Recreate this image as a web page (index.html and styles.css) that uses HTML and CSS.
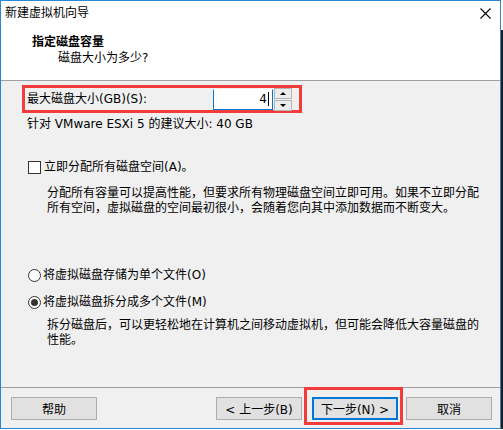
FILE: index.html
```html
<!DOCTYPE html>
<html lang="zh-CN">

<head>
    <meta charset="UTF-8">
    <meta name="viewport" content="width=device-width, initial-scale=1.0">
    <title>新建虚拟机向导</title>
    <link rel="stylesheet" href="styles.css">
</head>

<body>
    <div class="window">
        <div class="titlebar">
            <span class="titlebar-text">新建虚拟机向导</span>
            <svg class="close-icon" width="11" height="11" viewBox="0 0 11 11">
                <path d="M0.5 0.5 L10.5 10.5 M10.5 0.5 L0.5 10.5" stroke="#000" stroke-width="1.1" fill="none"/>
            </svg>
        </div>

        <div class="header">
            <div class="header-title">指定磁盘容量</div>
            <div class="header-subtitle">磁盘大小为多少?</div>
        </div>

        <div class="content">
            <div class="size-box">
                <label class="size-label" for="diskSize">最大磁盘大小(GB)(S):</label>
                <div class="size-input" id="diskSize"><span class="caret">4</span></div>
                <div class="spinner">
                    <div class="spin-btn"><span class="arrow-up"></span></div>
                    <div class="spin-btn"><span class="arrow-down"></span></div>
                </div>
            </div>

            <p class="hint">针对 VMware ESXi 5 的建议大小: 40 GB</p>

            <div class="option first-option">
                <span class="checkbox"></span>
                <span>立即分配所有磁盘空间(A)。</span>
            </div>
            <p class="desc">分配所有容量可以提高性能，但要求所有物理磁盘空间立即可用。如果不立即分配所有空间，虚拟磁盘的空间最初很小，会随着您向其中添加数据而不断变大。</p>

            <div class="option radio-option">
                <span class="radio"></span>
                <span>将虚拟磁盘存储为单个文件(O)</span>
            </div>
            <div class="option">
                <span class="radio checked"></span>
                <span>将虚拟磁盘拆分成多个文件(M)</span>
            </div>
            <p class="desc desc-split">拆分磁盘后，可以更轻松地在计算机之间移动虚拟机，但可能会降低大容量磁盘的性能。</p>
        </div>

        <div class="footer">
            <button class="btn btn-help">帮助</button>
            <div class="footer-spacer"></div>
            <button class="btn">&lt; 上一步(B)</button>
            <button class="btn btn-default">下一步(N) &gt;</button>
            <button class="btn btn-cancel">取消</button>
        </div>
    </div>
</body>

</html>
```

FILE: styles.css
```css
body {
    margin: 0;
    padding: 0;
    background: linear-gradient(#ffffff 30px, #1e1e1e 30px);
    font-family: "DejaVu Sans", "Noto Sans CJK SC", sans-serif;
    font-size: 12px;
    color: #000;
}

.window {
    width: 501px;
    height: 429px;
    box-sizing: border-box;
    border: 1px solid #2b87d6;
    background-color: #f0f0f0;
    display: flex;
    flex-direction: column;
}

.titlebar {
    height: 24px;
    display: flex;
    align-items: center;
    background-color: #fff;
    padding-left: 4px;
}

.titlebar-text {
    flex: 1;
    line-height: 24px;
}

.close-icon {
    margin-right: 9px;
}

.header {
    background-color: #fff;
    height: 56px;
    padding: 9px 0 0 31px;
    box-sizing: border-box;
    border-bottom: 1px solid #a0a0a0;
}

.header-title {
    font-weight: bold;
    line-height: 16px;
}

.header-subtitle {
    line-height: 16px;
    margin-left: 26px;
}

.content {
    flex: 1;
    padding: 4px 0 0 26px;
}

.size-box {
    display: flex;
    align-items: center;
    width: 280px;
    height: 28px;
    margin-left: -5px;
    box-sizing: border-box;
    border: 3px solid #f23b3b;
}

.size-label {
    width: 186px;
    padding-left: 2px;
    line-height: 16px;
}

.size-input {
    width: 60px;
    height: 21px;
    box-sizing: border-box;
    background-color: #fff;
    border: 1px solid #0078d7;
    border-top-color: #fff;
    text-align: right;
    padding-right: 3px;
    line-height: 19px;
}

.caret {
    border-right: 1px solid #000;
    padding-right: 1px;
}

.spinner {
    display: flex;
    flex-direction: column;
    gap: 1px;
    margin-left: 1px;
}

.spin-btn {
    width: 16px;
    height: 9px;
    border: 1px solid #b5b5b5;
    background-color: #ececec;
    display: flex;
    align-items: center;
    justify-content: center;
}

.arrow-up {
    border-left: 3px solid transparent;
    border-right: 3px solid transparent;
    border-bottom: 3px solid #000;
}

.arrow-down {
    border-left: 3px solid transparent;
    border-right: 3px solid transparent;
    border-top: 3px solid #000;
}

.hint {
    margin: 3px 0 0 0;
    line-height: 16px;
}

.option {
    display: flex;
    align-items: center;
    line-height: 16px;
    margin-top: 11px;
    margin-left: 1px;
}

.first-option {
    margin-top: 27px;
}

.radio-option {
    margin-top: 51px;
}

.checkbox {
    width: 11px;
    height: 11px;
    border: 1px solid #333;
    background-color: #fff;
    margin-right: 3px;
}

.radio {
    width: 11px;
    height: 11px;
    border: 1px solid #333;
    border-radius: 50%;
    background-color: #fff;
    margin-right: 2px;
    display: flex;
    align-items: center;
    justify-content: center;
}

.radio.checked::before {
    content: "";
    width: 7px;
    height: 7px;
    border-radius: 50%;
    background-color: #333;
}

.desc {
    width: 438px;
    margin: 11px 0 0 20px;
    line-height: 15px;
}

.desc-split {
    margin-top: 8px;
}

.footer {
    height: 41px;
    box-sizing: border-box;
    border-top: 1px solid #a0a0a0;
    padding: 9px 8px 0 10px;
    display: flex;
    align-items: flex-start;
}

.footer-spacer {
    flex: 1;
}

.btn {
    width: 86px;
    height: 23px;
    padding: 0;
    font-family: inherit;
    font-size: 12px;
    color: #000;
    background-color: #e1e1e1;
    border: 1px solid #adadad;
}

.btn-default {
    position: relative;
    margin-left: 10px;
    border: 2px solid #0078d7;
}

.btn-default::after {
    content: "";
    position: absolute;
    top: -12px;
    left: -10px;
    right: -7px;
    bottom: -7px;
    border: 3px solid #f23b3b;
}

.btn-cancel {
    margin-left: 8px;
}
```
